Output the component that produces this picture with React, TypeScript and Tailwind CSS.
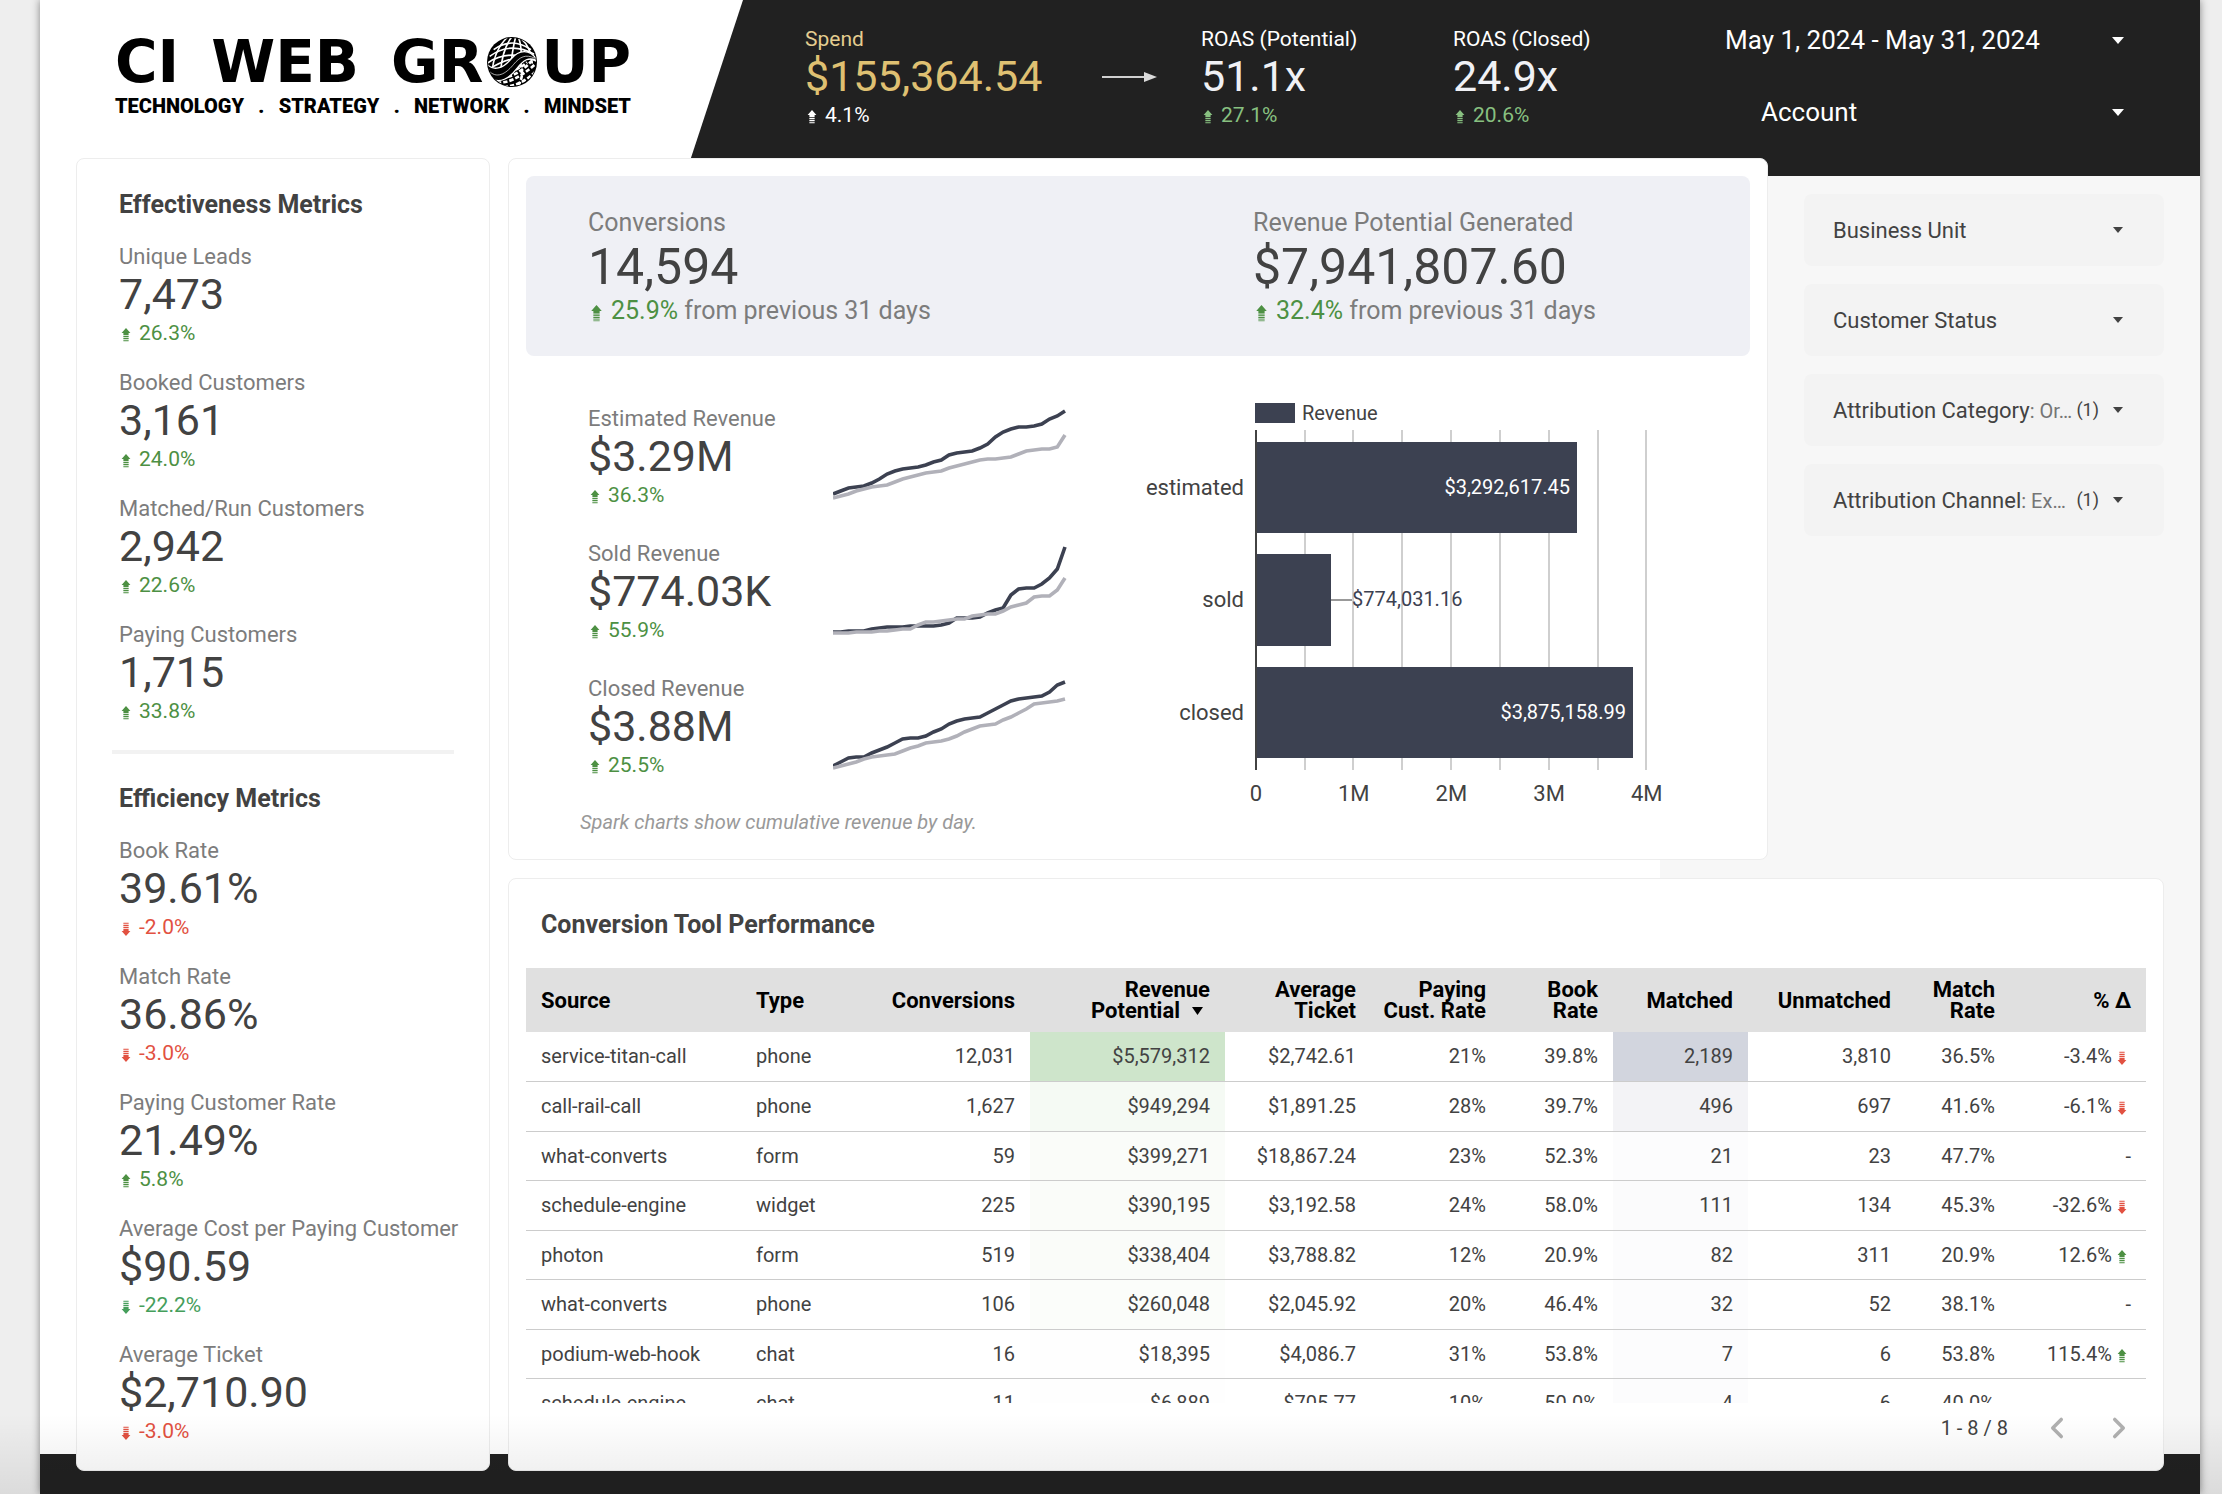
import React from "react";
import { ChevronLeft, ChevronRight } from "lucide-react";

interface IMetric {
  label: string;
  value: string;
  delta: string;
  down?: boolean;
  color?: string;
}

const GREEN = "text-[#4d9043]";
const RED = "text-[#e25141]";

const effectiveness: IMetric[] = [
  { label: "Unique Leads", value: "7,473", delta: "26.3%" },
  { label: "Booked Customers", value: "3,161", delta: "24.0%" },
  { label: "Matched/Run Customers", value: "2,942", delta: "22.6%" },
  { label: "Paying Customers", value: "1,715", delta: "33.8%" },
];

const efficiency: IMetric[] = [
  { label: "Book Rate", value: "39.61%", delta: "-2.0%", down: true, color: RED },
  { label: "Match Rate", value: "36.86%", delta: "-3.0%", down: true, color: RED },
  { label: "Paying Customer Rate", value: "21.49%", delta: "5.8%" },
  {
    label: "Average Cost per Paying Customer",
    value: "$90.59",
    delta: "-22.2%",
    down: true,
    color: "text-[#459e5b]",
  },
  { label: "Average Ticket", value: "$2,710.90", delta: "-3.0%", down: true, color: RED },
];

const revenue = [
  {
    label: "Estimated Revenue",
    value: "$3.29M",
    delta: "36.3%",
    current: [90, 87, 84, 83, 82, 79, 75, 70, 67, 65, 64, 63, 61, 58, 56, 51, 49, 48, 47, 44, 40, 33, 28, 25, 23, 23, 22, 20, 15, 12, 7],
    previous: [94, 92, 90, 87, 85, 83, 82, 81, 78, 75, 73, 71, 69, 68, 67, 64, 62, 60, 58, 56, 55, 55, 54, 53, 50, 47, 46, 45, 45, 43, 31],
  },
  {
    label: "Sold Revenue",
    value: "$774.03K",
    delta: "55.9%",
    current: [93, 93, 92, 92, 92, 90, 89, 88, 88, 88, 87, 87, 87, 87, 86, 84, 79, 79, 79, 78, 74, 71, 69, 56, 50, 49, 49, 45, 39, 30, 8],
    previous: [94, 94, 94, 93, 93, 93, 92, 92, 91, 90, 90, 86, 83, 83, 82, 81, 80, 80, 77, 76, 75, 75, 72, 68, 66, 64, 58, 57, 57, 51, 39],
  },
  {
    label: "Closed Revenue",
    value: "$3.88M",
    delta: "25.5%",
    current: [92, 88, 84, 83, 83, 79, 76, 73, 69, 65, 64, 64, 62, 58, 55, 50, 47, 45, 44, 43, 39, 35, 31, 27, 25, 24, 23, 22, 18, 11, 8],
    previous: [94, 92, 90, 88, 85, 83, 82, 81, 80, 77, 74, 72, 69, 68, 67, 65, 62, 58, 55, 52, 51, 50, 46, 43, 39, 35, 30, 29, 28, 27, 25],
  },
];

const columns = [
  { lines: ["Source"], width: "w-[215px]" },
  { lines: ["Type"], width: "w-[109px]" },
  { lines: ["Conversions"], width: "w-[180px]" },
  { lines: ["Revenue", "Potential"], width: "w-[195px]", sorted: true },
  { lines: ["Average", "Ticket"], width: "w-[146px]" },
  { lines: ["Paying", "Cust. Rate"], width: "w-[130px]" },
  { lines: ["Book", "Rate"], width: "w-[112px]" },
  { lines: ["Matched"], width: "w-[135px]" },
  { lines: ["Unmatched"], width: "w-[158px]" },
  { lines: ["Match", "Rate"], width: "w-[104px]" },
  { lines: ["% Δ"], width: "w-[136px]" },
];

const rows = [
  ["service-titan-call", "phone", "12,031", "$5,579,312", "$2,742.61", "21%", "39.8%", "2,189", "3,810", "36.5%", "-3.4%"],
  ["call-rail-call", "phone", "1,627", "$949,294", "$1,891.25", "28%", "39.7%", "496", "697", "41.6%", "-6.1%"],
  ["what-converts", "form", "59", "$399,271", "$18,867.24", "23%", "52.3%", "21", "23", "47.7%", "-"],
  ["schedule-engine", "widget", "225", "$390,195", "$3,192.58", "24%", "58.0%", "111", "134", "45.3%", "-32.6%"],
  ["photon", "form", "519", "$338,404", "$3,788.82", "12%", "20.9%", "82", "311", "20.9%", "12.6%"],
  ["what-converts", "phone", "106", "$260,048", "$2,045.92", "20%", "46.4%", "32", "52", "38.1%", "-"],
  ["podium-web-hook", "chat", "16", "$18,395", "$4,086.7", "31%", "53.8%", "7", "6", "53.8%", "115.4%"],
  ["schedule-engine", "chat", "11", "$6,889", "$705.77", "10%", "50.0%", "4", "6", "40.0%", ""],
];

const revenueHeat = [
  "bg-[#cee5cb]",
  "bg-[#f5faf4]",
  "bg-[#fafcf9]",
  "bg-[#fafcf9]",
  "bg-[#fafcf9]",
  "bg-[#fbfdfa]",
  "bg-[#fefefe]",
  "bg-[#fefefe]",
];

const matchedHeat = [
  "bg-[#d2d5de]",
  "bg-[#f3f3f6]",
  "bg-[#fcfcfd]",
  "bg-[#fbfbfc]",
  "bg-[#fcfcfd]",
  "bg-[#fcfcfd]",
  "bg-[#fcfcfd]",
  "bg-[#fcfcfd]",
];

const DeltaArrow: React.FC<{ down?: boolean; className?: string }> = ({
  down,
  className = "w-[14px] h-5",
}) => (
  <svg viewBox="0 0 14 20" className={className} fill="currentColor" aria-hidden="true">
    <g transform={down ? "matrix(1 0 0 -1 0 24)" : undefined}>
      <path d="M7 5 L11.4 10 H9.6 V12 H4.4 V10 H2.6 Z" />
      <rect x="4.4" y="12" width="5.2" height="7" opacity="0.25" />
      <rect x="4.4" y="13" width="5.2" height="1" />
      <rect x="4.4" y="15" width="5.2" height="1" />
      <rect x="4.4" y="17" width="5.2" height="1" opacity="0.7" />
    </g>
  </svg>
);

const Caret: React.FC<{ className?: string }> = ({ className = "h-[6px] w-[10px]" }) => (
  <svg
    viewBox="0 0 12 7"
    preserveAspectRatio="none"
    className={`shrink-0 ${className}`}
    fill="currentColor"
    aria-hidden="true"
  >
    <path d="M0 0h12L6 7z" />
  </svg>
);

const Metric: React.FC<IMetric> = ({ label, value, delta, down, color = GREEN }) => (
  <div>
    <p className="text-[22px] leading-[30px] text-[#7c7c7c]">{label}</p>
    <p className="text-[43px] leading-[44px] text-[#424242]">{value}</p>
    <p className={`flex items-center gap-[6px] text-[21px] leading-[34px] ${color}`}>
      <DeltaArrow down={down} />
      {delta}
    </p>
  </div>
);

const HeaderMetric: React.FC<{
  label: string;
  value: string;
  delta: string;
  labelColor: string;
  valueColor: string;
  deltaColor: string;
}> = ({ label, value, delta, labelColor, valueColor, deltaColor }) => (
  <div>
    <p className={`text-[21px] leading-[30px] ${labelColor}`}>{label}</p>
    <p className={`text-[43px] leading-[44px] ${valueColor}`}>{value}</p>
    <p className={`flex items-center gap-[6px] text-[21px] leading-[34px] ${deltaColor}`}>
      <DeltaArrow />
      {delta}
    </p>
  </div>
);

const Headline: React.FC<{ label: string; value: string; delta: string }> = ({
  label,
  value,
  delta,
}) => (
  <div>
    <p className="text-[25px] leading-9 text-[#7c7c7c]">{label}</p>
    <p className="text-[50px] leading-[52px] text-[#424242]">{value}</p>
    <p className="flex items-center text-[25px] leading-9 text-[#7c7c7c]">
      <DeltaArrow className="mr-[6px] h-6 w-[17px] text-[#4d9043]" />
      <span className="whitespace-pre">
        <span className="text-[#4d9043]">{delta}</span> from previous 31 days
      </span>
    </p>
  </div>
);

const Globe: React.FC = () => (
  <svg viewBox="0 0 150 150" className="w-[50px] h-[50px]" aria-hidden="true">
    <defs>
      <clipPath id="globe">
        <circle cx="75" cy="75" r="72" />
      </clipPath>
    </defs>
    <circle cx="75" cy="75" r="75" fill="#000" />
    <g clipPath="url(#globe)" fill="none" stroke="#fff">
      <g strokeWidth="5">
        <path d="M20 38 Q75 -2 132 38" />
        <path d="M8 58 Q70 12 142 52" />
        <path d="M2 78 Q66 34 148 72" />
        <path d="M4 98 Q62 60 120 60" />
        <path d="M62 0 Q22 36 14 108" />
        <path d="M74 0 Q46 36 40 108" />
        <path d="M86 0 Q76 36 70 100" />
        <path d="M94 0 Q106 30 102 84" />
        <path d="M102 4 Q132 30 136 80" />
      </g>
      <g strokeWidth="8" strokeDasharray="13 6">
        <path d="M30 136 Q76 142 142 84" />
        <path d="M44 120 Q84 124 134 72" />
        <path d="M68 104 Q98 96 120 76" />
        <path d="M50 148 Q98 150 146 104" />
        <path d="M96 80 Q116 108 92 150" />
      </g>
      <path
        d="M-4 76 C18 108 50 92 72 66 S128 30 154 74 C126 56 108 70 90 94 S36 150 4 116 Z"
        fill="#000"
        strokeWidth="4"
      />
      <path d="M8 104 C34 128 62 104 80 82 S116 50 144 64" strokeWidth="2" />
    </g>
  </svg>
);

const Logo: React.FC = () => (
  <div className="w-[516px] text-black">
    <div className="flex items-center justify-between font-['DejaVu_Sans',sans-serif] text-[58px] leading-[50px] font-bold">
      <span>CI</span>
      <span>WEB</span>
      <span className="flex items-center gap-1">
        GR
        <Globe />
        UP
      </span>
    </div>
    <div className="mt-[7px] flex justify-between text-xl leading-6 font-black">
      <span>TECHNOLOGY</span>
      <span>.</span>
      <span>STRATEGY</span>
      <span>.</span>
      <span>NETWORK</span>
      <span>.</span>
      <span>MINDSET</span>
    </div>
  </div>
);

const Header: React.FC = () => (
  <header className="flex h-[176px] bg-[#212121] pr-[76px]">
    <div className="w-[703px] shrink-0 bg-white pt-[37px] pl-[75px] [clip-path:polygon(0_0,100%_0,645px_100%,0_100%)]">
      <Logo />
    </div>
    <div className="flex shrink-0 pt-6 pl-[62px]">
      <div className="w-[297px]">
        <HeaderMetric
          label="Spend"
          value="$155,364.54"
          delta="4.1%"
          labelColor="text-[#e4cd90]"
          valueColor="text-[#dfc072]"
          deltaColor="text-white"
        />
      </div>
      <svg viewBox="0 0 56 12" className="mt-[47px] mr-[43px] h-3 w-14" aria-hidden="true">
        <path d="M0 6h43" stroke="#d0d0d0" strokeWidth="2" />
        <path d="M42 1l13 5-13 5z" fill="#dadada" />
      </svg>
      <div className="w-[252px]">
        <HeaderMetric
          label="ROAS (Potential)"
          value="51.1x"
          delta="27.1%"
          labelColor="text-white"
          valueColor="text-[#f0f1f5]"
          deltaColor="text-[#88c080]"
        />
      </div>
      <div className="w-[272px]">
        <HeaderMetric
          label="ROAS (Closed)"
          value="24.9x"
          delta="20.6%"
          labelColor="text-white"
          valueColor="text-[#f0f1f5]"
          deltaColor="text-[#88c080]"
        />
      </div>
    </div>
    <div className="flex flex-1 flex-col gap-8 pt-5 text-[26px] text-white">
      <button type="button" className="flex h-10 items-center justify-between">
        May 1, 2024 - May 31, 2024
        <Caret className="h-[7px] w-3" />
      </button>
      <div className="flex h-10 items-center pl-9">
        <select aria-label="Account" className="flex-1 appearance-none bg-transparent">
          <option>Account</option>
        </select>
        <Caret className="h-[7px] w-3" />
      </div>
    </div>
  </header>
);

const Sidebar: React.FC = () => (
  <section className="w-[414px] shrink-0 rounded-lg border border-[#ededed] bg-white px-[35px] pt-[30px] pb-4">
    <div className="pl-[7px]">
      <h2 className="mb-[21px] text-[25px] leading-8 font-bold text-[#424242]">
        Effectiveness Metrics
      </h2>
      <div className="flex flex-col gap-[18px] whitespace-nowrap">
        {effectiveness.map((metric) => (
          <Metric key={metric.label} {...metric} />
        ))}
      </div>
    </div>
    <hr className="mt-[22px] mb-[29px] border-t-4 border-[#f2f2f2]" />
    <div className="pl-[7px]">
      <h2 className="mb-[21px] text-[25px] leading-8 font-bold text-[#424242]">
        Efficiency Metrics
      </h2>
      <div className="flex flex-col gap-[18px] whitespace-nowrap">
        {efficiency.map((metric) => (
          <Metric key={metric.label} {...metric} />
        ))}
      </div>
    </div>
  </section>
);

const toPoints = (values: number[]) =>
  values.map((y, i) => `${((i * 232) / 30).toFixed(1)},${y}`).join(" ");

const Sparkline: React.FC<{ current: number[]; previous: number[] }> = ({ current, previous }) => (
  <svg viewBox="0 0 234 100" className="h-[100px] w-[234px]" fill="none" strokeWidth="3.6">
    <polyline points={toPoints(current)} stroke="#3c4151" />
    <polyline points={toPoints(previous)} stroke="#b1b1b9" />
  </svg>
);

const bars = [
  { name: "estimated", y: 46, height: 91, width: 321, text: "$3,292,617.45" },
  { name: "sold", y: 158, height: 92, width: 75, text: "$774,031.16", outside: true },
  { name: "closed", y: 271, height: 91, width: 377, text: "$3,875,158.99" },
];

const gridlines = [184, 232, 281, 330, 379, 428, 477, 525];

const RevenueChart: React.FC = () => (
  <svg
    viewBox="0 0 560 420"
    className="h-[420px] w-[560px]"
    role="img"
    aria-label="Revenue by stage"
    fontSize="22"
  >
    <rect x="135" y="7" width="40" height="20" fill="#3c4151" />
    <text x="182" y="24" fontSize="20" fill="#424242">
      Revenue
    </text>
    {gridlines.map((x) => (
      <rect key={x} x={x} y="34" width="2" height="340" fill="#cfcfcf" />
    ))}
    {bars.map((bar) => (
      <g key={bar.name}>
        <rect x="136" y={bar.y} width={bar.width} height={bar.height} fill="#3c4151" />
        <text x="124" y={bar.y + 53} textAnchor="end" fill="#424242">
          {bar.name}
        </text>
        {bar.outside ? (
          <>
            <rect x={136 + bar.width} y={bar.y + 45} width="21" height="2" fill="#999" />
            <text x={136 + bar.width + 21} y={bar.y + 52} fontSize="20" fill="#3c4151">
              {bar.text}
            </text>
          </>
        ) : (
          <text x={129 + bar.width} y={bar.y + 52} fontSize="20" textAnchor="end" fill="#fff">
            {bar.text}
          </text>
        )}
      </g>
    ))}
    <rect x="135" y="34" width="2" height="340" fill="#424242" />
    {["0", "1M", "2M", "3M", "4M"].map((tick, i) => (
      <text key={tick} x={136 + i * 97.7} y="405" textAnchor="middle" fill="#424242">
        {tick}
      </text>
    ))}
  </svg>
);

const Overview: React.FC = () => (
  <section className="flex-1 rounded-lg border border-[#ededed] bg-white px-[17px] pt-[17px] pb-[23px]">
    <div className="grid h-[180px] grid-cols-[665px_1fr] rounded-lg bg-[#eff0f5] pt-[29px] pl-[62px]">
      <Headline label="Conversions" value="14,594" delta="25.9%" />
      <Headline label="Revenue Potential Generated" value="$7,941,807.60" delta="32.4%" />
    </div>
    <div className="flex">
      <div className="pt-12 pl-[62px]">
        <div className="flex flex-col gap-[27px]">
          {revenue.map(({ current, previous, ...metric }) => (
            <div key={metric.label} className="flex">
              <div className="w-[245px]">
                <Metric {...metric} />
              </div>
              <Sparkline current={current} previous={previous} />
            </div>
          ))}
        </div>
        <p className="mt-[26px] -ml-2 text-xl leading-7 text-[#999] italic">
          Spark charts show cumulative revenue by day.
        </p>
      </div>
      <div className="pt-10 pl-[53px]">
        <RevenueChart />
      </div>
    </div>
  </section>
);

const FilterSelect: React.FC<{ label: string }> = ({ label }) => (
  <div className="flex h-[72px] items-center rounded-lg bg-[#f3f3f3] pr-[41px] pl-[29px]">
    <select aria-label={label} className="flex-1 appearance-none bg-transparent">
      <option>{label}</option>
    </select>
    <Caret />
  </div>
);

const FilterButton: React.FC<{ label: string; value: string }> = ({ label, value }) => (
  <button
    type="button"
    className="flex h-[72px] items-center rounded-lg bg-[#f3f3f3] pr-[41px] pl-[29px] text-left"
  >
    <span className="flex-1 whitespace-nowrap">
      {label}
      <span className="text-xl text-[#757575]">: {value}</span>
    </span>
    <span className="mr-[14px] text-lg">(1)</span>
    <Caret />
  </button>
);

const Filters: React.FC = () => (
  <aside className="flex w-[360px] shrink-0 flex-col gap-[18px] pt-9 text-[22px] text-[#424242]">
    <FilterSelect label="Business Unit" />
    <FilterSelect label="Customer Status" />
    <FilterButton label="Attribution Category" value="Or…" />
    <FilterButton label="Attribution Channel" value="Ex…" />
  </aside>
);

const DeltaCell: React.FC<{ value: string }> = ({ value }) => {
  if (value === "-" || value === "") {
    return <>{value}</>;
  }
  const down = value.startsWith("-");
  return (
    <span className="flex items-center justify-end gap-[3px] pr-[2px]">
      {value}
      <span className={down ? RED : GREEN}>
        <DeltaArrow down={down} />
      </span>
    </span>
  );
};

const Performance: React.FC = () => (
  <section className="rounded-lg border border-[#ededed] bg-white px-[17px] pt-[30px] pb-[17px]">
    <h2 className="mb-[27px] pl-[15px] text-[25px] leading-8 font-bold text-[#424242]">
      Conversion Tool Performance
    </h2>
    <div className="h-[435px] overflow-hidden">
      <table className="w-full table-fixed border-collapse text-xl text-[#424242]">
        <thead className="bg-[#e0e0e0] text-[22px] leading-[21px] text-black">
          <tr className="h-16">
            {columns.map(({ lines, width, sorted }, i) => (
              <th
                key={lines.join(" ")}
                className={`${width} px-[15px] py-0 font-bold ${i < 2 ? "text-left" : "text-right"}`}
              >
                {lines.map((line, n) => (
                  <span
                    key={line}
                    className={`flex whitespace-nowrap ${i < 2 ? "justify-start" : "justify-end"}`}
                  >
                    {line}
                    {sorted && n === 1 && (
                      <Caret className="mr-[7px] ml-3 h-2 w-[11px] self-center" />
                    )}
                  </span>
                ))}
              </th>
            ))}
          </tr>
        </thead>
        <tbody>
          {rows.map((row, r) => (
            <tr key={r} className="h-[49px] border-b border-[#cccccc] even:h-[50px]">
              {row.map((cell, c) => (
                <td
                  key={c}
                  className={`px-[15px] py-0 ${c < 2 ? "text-left" : "text-right"} ${
                    c === 3 ? revenueHeat[r] : c === 7 ? matchedHeat[r] : ""
                  }`}
                >
                  {c === 10 ? <DeltaCell value={cell} /> : cell}
                </td>
              ))}
            </tr>
          ))}
        </tbody>
      </table>
    </div>
    <div className="flex h-[50px] items-center justify-end pr-[10px] text-xl text-[#424242]">
      1 - 8 / 8
      <button type="button" aria-label="Previous page" className="ml-8 text-[#b0b0b0]">
        <ChevronLeft size={34} strokeWidth={2.5} />
      </button>
      <button type="button" aria-label="Next page" className="ml-7 text-[#b0b0b0]">
        <ChevronRight size={34} strokeWidth={2.5} />
      </button>
    </div>
  </section>
);

const App: React.FC = () => {
  return (
    <div className="relative min-h-screen bg-[#eeeeee] pr-[22px] pl-10 font-[Roboto,sans-serif]">
      <div className="flex min-h-screen flex-col shadow-[0_0_8px_rgba(0,0,0,0.45)]">
        <Header />
        <div className="flex flex-1 flex-col bg-[linear-gradient(to_right,#fff_75%,#f7f7f7_75%)]">
          <main className="relative -mt-[18px] -mb-[17px] flex gap-[18px] pr-9 pl-9">
            <Sidebar />
            <div className="flex min-w-0 flex-1 flex-col gap-[18px]">
              <div className="flex gap-9">
                <Overview />
                <Filters />
              </div>
              <Performance />
            </div>
          </main>
        </div>
        <footer className="h-10 bg-[#212121]" />
      </div>
      <div className="pointer-events-none absolute inset-x-0 bottom-0 h-20 bg-gradient-to-b from-transparent to-black/8" />
    </div>
  );
};

export default App;
